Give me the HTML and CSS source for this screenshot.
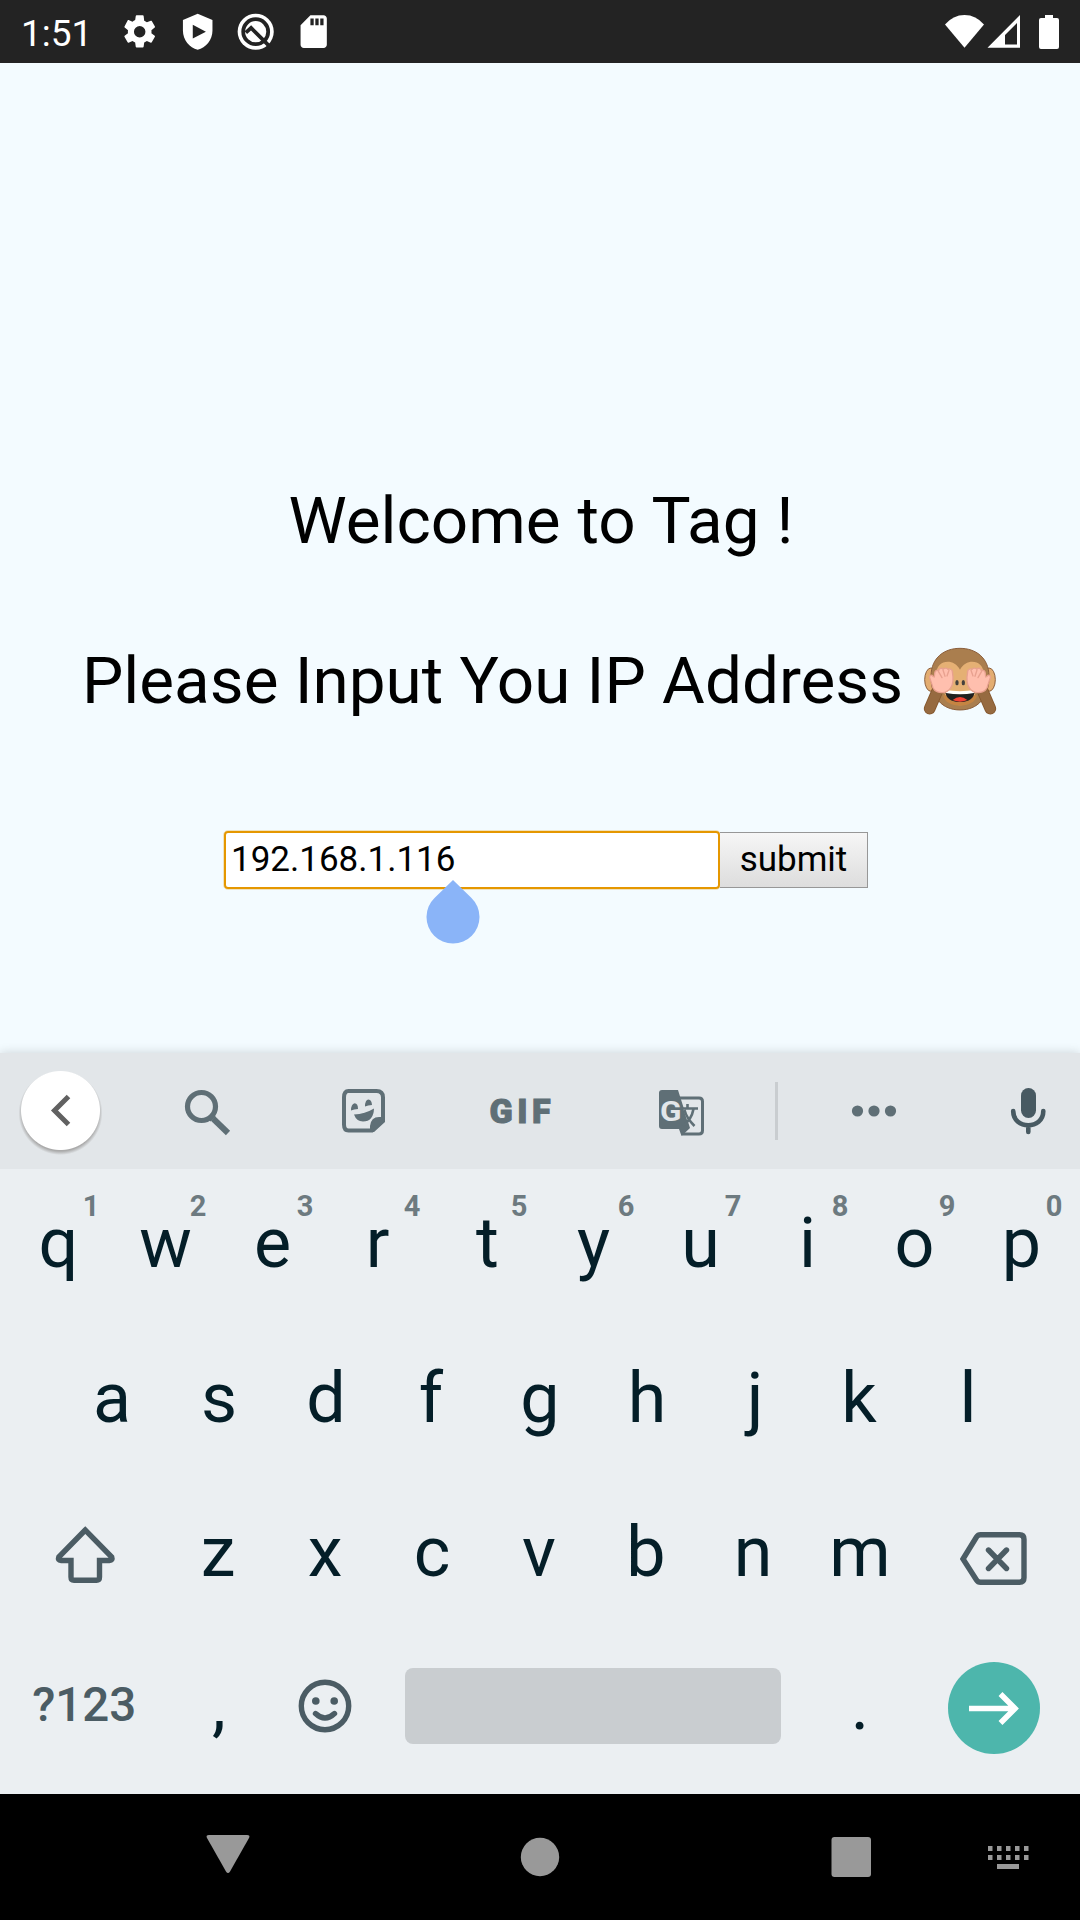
FILE: index.html
```html
<!DOCTYPE html>
<html lang="en">
<head>
<meta charset="utf-8">
<title>Tag</title>
<link rel="stylesheet" href="styles.css">
</head>
<body>
<header class="status-bar">
  <span class="clock">1:51</span>
  <div class="notifications">
    <svg class="status-icon" viewBox="0 0 24 24"><path fill-rule="evenodd" d="M19.14 12.94c.04-.3.06-.61.06-.94s-.02-.64-.07-.94l2.03-1.58c.18-.14.23-.41.12-.61l-1.92-3.32c-.12-.22-.37-.29-.59-.22l-2.39.96c-.5-.38-1.03-.7-1.62-.94L14.4 2.41c-.04-.24-.24-.41-.48-.41h-3.84c-.24 0-.43.17-.47.41l-.36 2.54c-.59.24-1.13.57-1.62.94l-2.39-.96c-.22-.08-.47 0-.59.22L2.74 8.87c-.12.21-.08.47.12.61l2.03 1.58c-.05.3-.09.63-.09.94s.02.64.07.94l-2.03 1.58c-.18.14-.23.41-.12.61l1.92 3.32c.12.22.37.29.59.22l2.39-.96c.5.38 1.03.7 1.62.94l.36 2.54c.05.24.24.41.48.41h3.84c.24 0 .44-.17.47-.41l.36-2.54c.59-.24 1.13-.56 1.62-.94l2.39.96c.22.08.47 0 .59-.22l1.92-3.32c.12-.22.07-.47-.12-.61zM12 15.5a3.5 3.5 0 1 1 0-7 3.5 3.5 0 0 1 0 7z"/></svg>
    <svg class="status-icon" viewBox="0 0 24 24"><path fill-rule="evenodd" d="M12 1 3 4.8V11.500C3 17 7 21.900 12 23c5-1.100 9-6 9-11.500V4.800zM9 7.800 17 12l-8 4.200z"/></svg>
    <svg class="status-icon" viewBox="0 0 24 24"><circle cx="12" cy="12" r="11"/><circle class="cut" cx="12" cy="12" r="7.600"/><path class="cut" d="m6 12.600 3.200-2.900 9.300 9.300 3 3"/></svg>
    <svg class="status-icon" viewBox="0 0 24 24"><path fill-rule="evenodd" d="M18 2h-8L4 8v12c0 1.100.9 2 2 2h12c1.100 0 2-.9 2-2V4c0-1.100-.9-2-2-2zm-6 6h-2V4h2zm3 0h-2V4h2zm3 0h-2V4h2z"/></svg>
  </div>
  <svg class="signals" viewBox="940 10 124 42"><path d="M964.500 46.700 945 23.500Q953 14 964.500 14T984 23.500z"/><path fill-rule="evenodd" d="M1020 14v32.700h-32.500zM1017 22l-12 12v9.500h12z"/><path d="M1045 14h8v3h4q2 0 2 2v27q0 2-2 2h-16q-2 0-2-2V19q0-2 2-2h4z"/></svg>
</header>

<main class="page">
  <h1 class="title welcome">Welcome to Tag !</h1>
  <h1 class="title prompt"><span>Please Input You IP Address</span>
    <svg class="monkey" viewBox="0 0 222 208">
      <g stroke="#8b5e3c" stroke-width="3">
        <ellipse cx="24" cy="98" rx="19" ry="35" fill="#e3ad71"/><ellipse cx="198" cy="98" rx="19" ry="35" fill="#e3ad71"/>
        <path d="M24 86C25 32 64 4 111 4s86 28 87 82c1 66-34 103-87 103S23 152 24 86z" fill="#aa7e4e"/>
      </g>
      <path d="M40 82c-2-42 51-52 71-14 20-38 73-28 71 14 0 26-20 36-25 58-8 46-84 46-92 0-5-22-25-32-25-58z" fill="#e5b074"/>
      <path d="M60 145h102c-8 42-94 42-102 0z" fill="#c58442"/>
      <path d="M66 131q45 9 90 0-4 34-45 34t-45-34z" fill="#202020"/>
      <path d="M66 129q45 7 90 0l-3 9q-42 8-84 0z" fill="#fff"/>
      <path d="M89 159q22-18 44 0-22 10-44 0z" fill="#f34235"/>
      <path d="M42 134 20 185m160-51 22 51" stroke="#85582f" stroke-width="35" stroke-linecap="round"/>
      <path d="M42 134 20 185m160-51 22 51" stroke="#966a40" stroke-width="30" stroke-linecap="round"/>
      <g fill="#ffbfae" stroke="#e8a18f" stroke-width="4" stroke-linecap="round" stroke-linejoin="round">
        <path d="M55 137C40 136 29 127 27 113L20 92c-1-8 6-9 10-4l4 2 1-10c0-9 7-12 12-9 1-7 9-9 14-5 4-4 11-3 14 1 5-3 13 0 13 7 4 22 2 39-5 49-6 9-15 15-28 14z"/>
        <path d="m46 73 11 19m3-23 6 19M78 70l-6 17"/>
        <path d="M167 137c15-1 26-10 28-24l7-21c1-8-6-9-10-4l-4 2-1-10c0-9-7-12-12-9-1-7-9-9-14-5-4-4-11-3-14 1-5-3-13 0-13 7-4 22-2 39 5 49 6 9 15 15 28 14z"/>
        <path d="m176 73-11 19m-3-23-6 19m-12-18 6 17"/>
      </g>
      <ellipse cx="102" cy="107" rx="5" ry="8" fill="#45413d"/><ellipse cx="121" cy="107" rx="5" ry="8" fill="#45413d"/>
    </svg>
  </h1>
  <form class="ip-form">
    <input class="ip-input" type="text" value="192.168.1.116"><button class="submit" type="button">submit</button>
    <svg class="caret-handle" viewBox="0 0 54 64"><path d="M27 0 45.500 18A26.500 26.500 0 1 1 8.500 18z"/></svg>
  </form>
</main>

<section class="keyboard">
  <div class="toolbar">
    <svg class="toolbar-icons" viewBox="0 1053 1080 116">
      <path d="M68.500 1096.500 54.500 1110.500l14 14" fill="none" stroke="#616161" stroke-width="5"/>
      <g fill="none" stroke="#5f6f76" stroke-width="5.200"><circle cx="201.500" cy="1106.500" r="14"/><path d="m211 1117 2 2" stroke-width="7"/><path d="m213 1118.500 15 14.500" stroke-width="6"/></g>
      <path d="M348.500 1091h28q6.500 0 6.500 6.500v22.500l-11 10.500h-23.500q-4.500 0-4.500-6v-27q0-6.500 4.500-6.500z" fill="none" stroke="#5f6f76" stroke-width="4"/>
      <path d="M370 1132v-6q1-9 9-9h6v5l-11 10zM354 1114.500q11-.5 20-6-.5 13-11 13-6.500 0-9-7zM351 1110.500q0-6.500 3.700-7.200 3.300.3 3.300 5.700-4 .2-7 1.500zM365 1106.500q0-6.600 3.500-7 3.200.3 3.500 5.500-4 .1-7 1.500z" fill="#5f6f76"/>
      <text class="gif" x="489.500" y="1122.500" textLength="61">GIF</text>
      <path d="M679 1098h20q3.500 0 3.500 3.500v29q0 3.500-3.500 3.500h-17" fill="none" stroke="#5f6f76" stroke-width="3"/>
      <path d="M662 1090h16l12 38-8.500 8-2.500-7h-17q-3 0-3-3v-33q0-3 3-3z" fill="#5f6f76"/>
      <path d="m683 1108 5 15 3-7z" fill="#e2e6e9"/>
      <text class="g-letter" x="660" y="1120.500" textLength="21.500" lengthAdjust="spacingAndGlyphs">G</text>
      <path d="M681 1108.500h17M687.500 1104v4m6 1q-2 11-11 17m2-16q2 8 10 16" fill="none" stroke="#5f6f76" stroke-width="2.600"/>
      <path d="M775 1082h3v58h-3z" fill="#c9cdd0"/>
      <g fill="#5f6f76"><circle cx="857.500" cy="1111" r="5.600"/><circle cx="874" cy="1111" r="5.600"/><circle cx="890.500" cy="1111" r="5.600"/></g>
      <rect x="1021" y="1088" width="15" height="30" rx="7.500" fill="#485a62"/>
      <path d="M1013.200 1111c0 19 30.100 19 30.100 0M1028.300 1126v6" fill="none" stroke="#485a62" stroke-width="4.600" stroke-linecap="round"/>
    </svg>
  </div>

  <div class="row">
    <div class="key">q<sup>1</sup></div><div class="key">w<sup>2</sup></div><div class="key">e<sup>3</sup></div><div class="key lean-left">r<sup>4</sup></div><div class="key lean-right">t<sup>5</sup></div><div class="key">y<sup>6</sup></div><div class="key">u<sup>7</sup></div><div class="key">i<sup>8</sup></div><div class="key">o<sup>9</sup></div><div class="key">p<sup>0</sup></div>
  </div>
  <div class="row">
    <div class="key">a</div><div class="key">s</div><div class="key">d</div><div class="key lean-left">f</div><div class="key">g</div><div class="key">h</div><div class="key lean-right">j</div><div class="key lean-left">k</div><div class="key">l</div>
  </div>
  <div class="row third">
    <div class="key wide"><svg class="shift" viewBox="53 1525 63 63"><path d="M85.300 1531 58.800 1558Q57.500 1561.500 61 1561.500H71v16.500q0 3.200 3 3.200h22.500q3 0 3-3.200v-16.500h10q3.500 0 2.200-3.500z"/></svg></div>
    <div class="key">z</div><div class="key">x</div><div class="key">c</div><div class="key">v</div><div class="key">b</div><div class="key">n</div><div class="key">m</div>
    <div class="key wide"><svg class="backspace" viewBox="958 1525 71 63"><path d="m963 1559 13.500-22q1.500-2.200 4-2.200h39q4.500 0 4.500 4.500v38.500q0 4.500-4.500 4.500h-39q-2.500 0-4-2.300zM988.500 1550l18 18.500m0-18.500-18 18.500"/></svg></div>
  </div>
  <div class="row bottom">
    <div class="key mode">?123</div>
    <div class="key lean-right">,</div>
    <div class="key"><svg class="smiley" viewBox="0 0 54 54"><circle cx="27" cy="27" r="23.700"/><path d="M17.500 34.500q9.500 9 19 0"/><circle class="eye" cx="17.800" cy="22" r="3.800"/><circle class="eye" cx="36.200" cy="22" r="3.800"/></svg></div>
    <div class="space"></div>
    <div class="key">.</div>
    <div class="enter"><svg viewBox="0 0 92 92"><path d="M21 46.500h47M52.500 32 67 46.500 52.500 61"/></svg></div>
  </div>
</section>

<nav class="nav-bar">
  <svg viewBox="0 1794 1080 126">
    <path d="M209 1835h38q3.500 0 2 3l-19 33.500q-2 3-4 0L207 1838q-1.500-3 2-3z"/>
    <circle cx="540" cy="1857" r="19.200"/>
    <rect x="831.500" y="1837" width="39.500" height="40" rx="3"/>
    <path d="M988 1848.500h40.500M988 1857.500h40.500" fill="none" stroke="#999" stroke-width="4.800" stroke-dasharray="4.500 4.500"/>
    <path d="M997 1864h22v5h-22z"/>
  </svg>
</nav>
</body>
</html>
```
FILE: styles.css
```css
* { box-sizing: border-box; }

body {
  margin: 0;
  width: 1080px;
  height: 1920px;
  display: flex;
  flex-direction: column;
  overflow: hidden;
  background: #f3fbff;
  font-family: Roboto, sans-serif;
}

svg { display: block; flex: none; }

.status-bar {
  height: 63px;
  display: flex;
  align-items: center;
  padding: 0 16px 0 21px;
  background: #232323;
  color: #fff;
  fill: #fff;
}

.clock { width: 99px; font-size: 37px; line-height: 63px; padding-top: 3px; }
.notifications { display: flex; gap: 18.600px; flex: 1; }
.status-icon { width: 39.400px; height: 39.400px; }
.cut { fill: none; stroke: #232323; stroke-width: 2.300; }
.signals { width: 124px; height: 42px; }

.page {
  height: 990px;
  padding-top: 418px;
  display: flex;
  flex-direction: column;
  align-items: center;
}

.title {
  margin: 0 0 80px;
  height: 80px;
  line-height: 80px;
  font-size: 65.600px;
  font-weight: 400;
  white-space: nowrap;
}

.welcome { word-spacing: .7px; padding-left: 2px; }
.prompt { display: flex; align-items: center; gap: 20px; margin-bottom: 110px; padding-right: 1px; }
.monkey { width: 74px; height: 69.300px; margin-top: 1px; }

.ip-form {
  position: relative;
  display: flex;
  align-items: center;
  height: 58px;
  margin-left: 12px;
}

.ip-input {
  width: 496px;
  height: 58px;
  padding: 0 4px 1px 5px;
  border: 2.500px solid #e59700;
  border-radius: 4px;
  outline: 1px solid rgba(229, 151, 0, .25);
  background: #fff;
  color: #000;
  font: 35px Roboto, sans-serif;
}

.submit {
  width: 148px;
  height: 56px;
  padding: 0 0 2px;
  border: 1px solid #979797;
  border-left: 0;
  background: linear-gradient(#f6f6f6, #dddddd);
  color: #000;
  font: 35px Roboto, sans-serif;
}

.caret-handle {
  position: absolute;
  left: 202px;
  top: 48.500px;
  width: 54px;
  height: 64px;
  fill: #8ab4f8;
}

.keyboard {
  height: 741px;
  background: #ebeff2;
  box-shadow: 0 0 10px rgba(0, 0, 0, .16);
  color: #041e28;
}

.toolbar {
  height: 116px;
  background: radial-gradient(circle at 60.500px 57.500px, #fff 39px, transparent 40px), radial-gradient(circle at 60.500px 60px, #aaa 38px, transparent 42px), #e2e6e9;
}
.toolbar-icons { width: 1080px; height: 116px; }
.gif { font: 900 34px Roboto, sans-serif; fill: #5f6f76; stroke: #5f6f76; stroke-width: 1; }
.g-letter { font: 700 27px Roboto, sans-serif; fill: #e2e6e9; }

.row {
  height: 154.500px;
  display: flex;
  justify-content: center;
}

.key {
  position: relative;
  width: 107px;
  padding-bottom: 5px;
  display: flex;
  justify-content: center;
  align-items: center;
  font-size: 70px;
  line-height: 149px;
}

.key sup {
  position: absolute;
  left: 76px;
  top: 20px;
  width: 20px;
  text-align: center;
  font-size: 29px;
  font-weight: 700;
  line-height: 34px;
  color: #6d7a80;
}

.lean-left { padding-right: 4px; }
.lean-right { padding-left: 2px; }
.third { padding-right: 2px; }
.wide { width: 160.500px; padding-bottom: 0; }

.shift, .backspace, .smiley {
  fill: none;
  stroke: #4b5c64;
  stroke-width: 5.400;
  stroke-linecap: round;
}
.shift { width: 63px; height: 63px; margin-top: 1px; }
.backspace { width: 71px; height: 63px; margin-top: 2px; }
.smiley { width: 54px; height: 54px; }
.smiley .eye { fill: #4b5c64; stroke: none; }

.bottom { height: 161.500px; justify-content: flex-start; padding-left: 4px; }
.bottom .key { padding-bottom: 15px; }
.mode { width: 160.500px; color: #4b5c64; font-size: 47.500px; font-weight: 500; }
.space { width: 376px; height: 76px; margin: 35px 26px 0; border-radius: 8px; background: #c9cdd0; }
.enter { width: 92px; height: 92px; margin: 29px 0 0 34px; border-radius: 50%; background: #4db6ac; }
.enter path { fill: none; stroke: #fff; stroke-width: 5.500; }

.nav-bar { height: 126px; background: #000; fill: #999; }
```
